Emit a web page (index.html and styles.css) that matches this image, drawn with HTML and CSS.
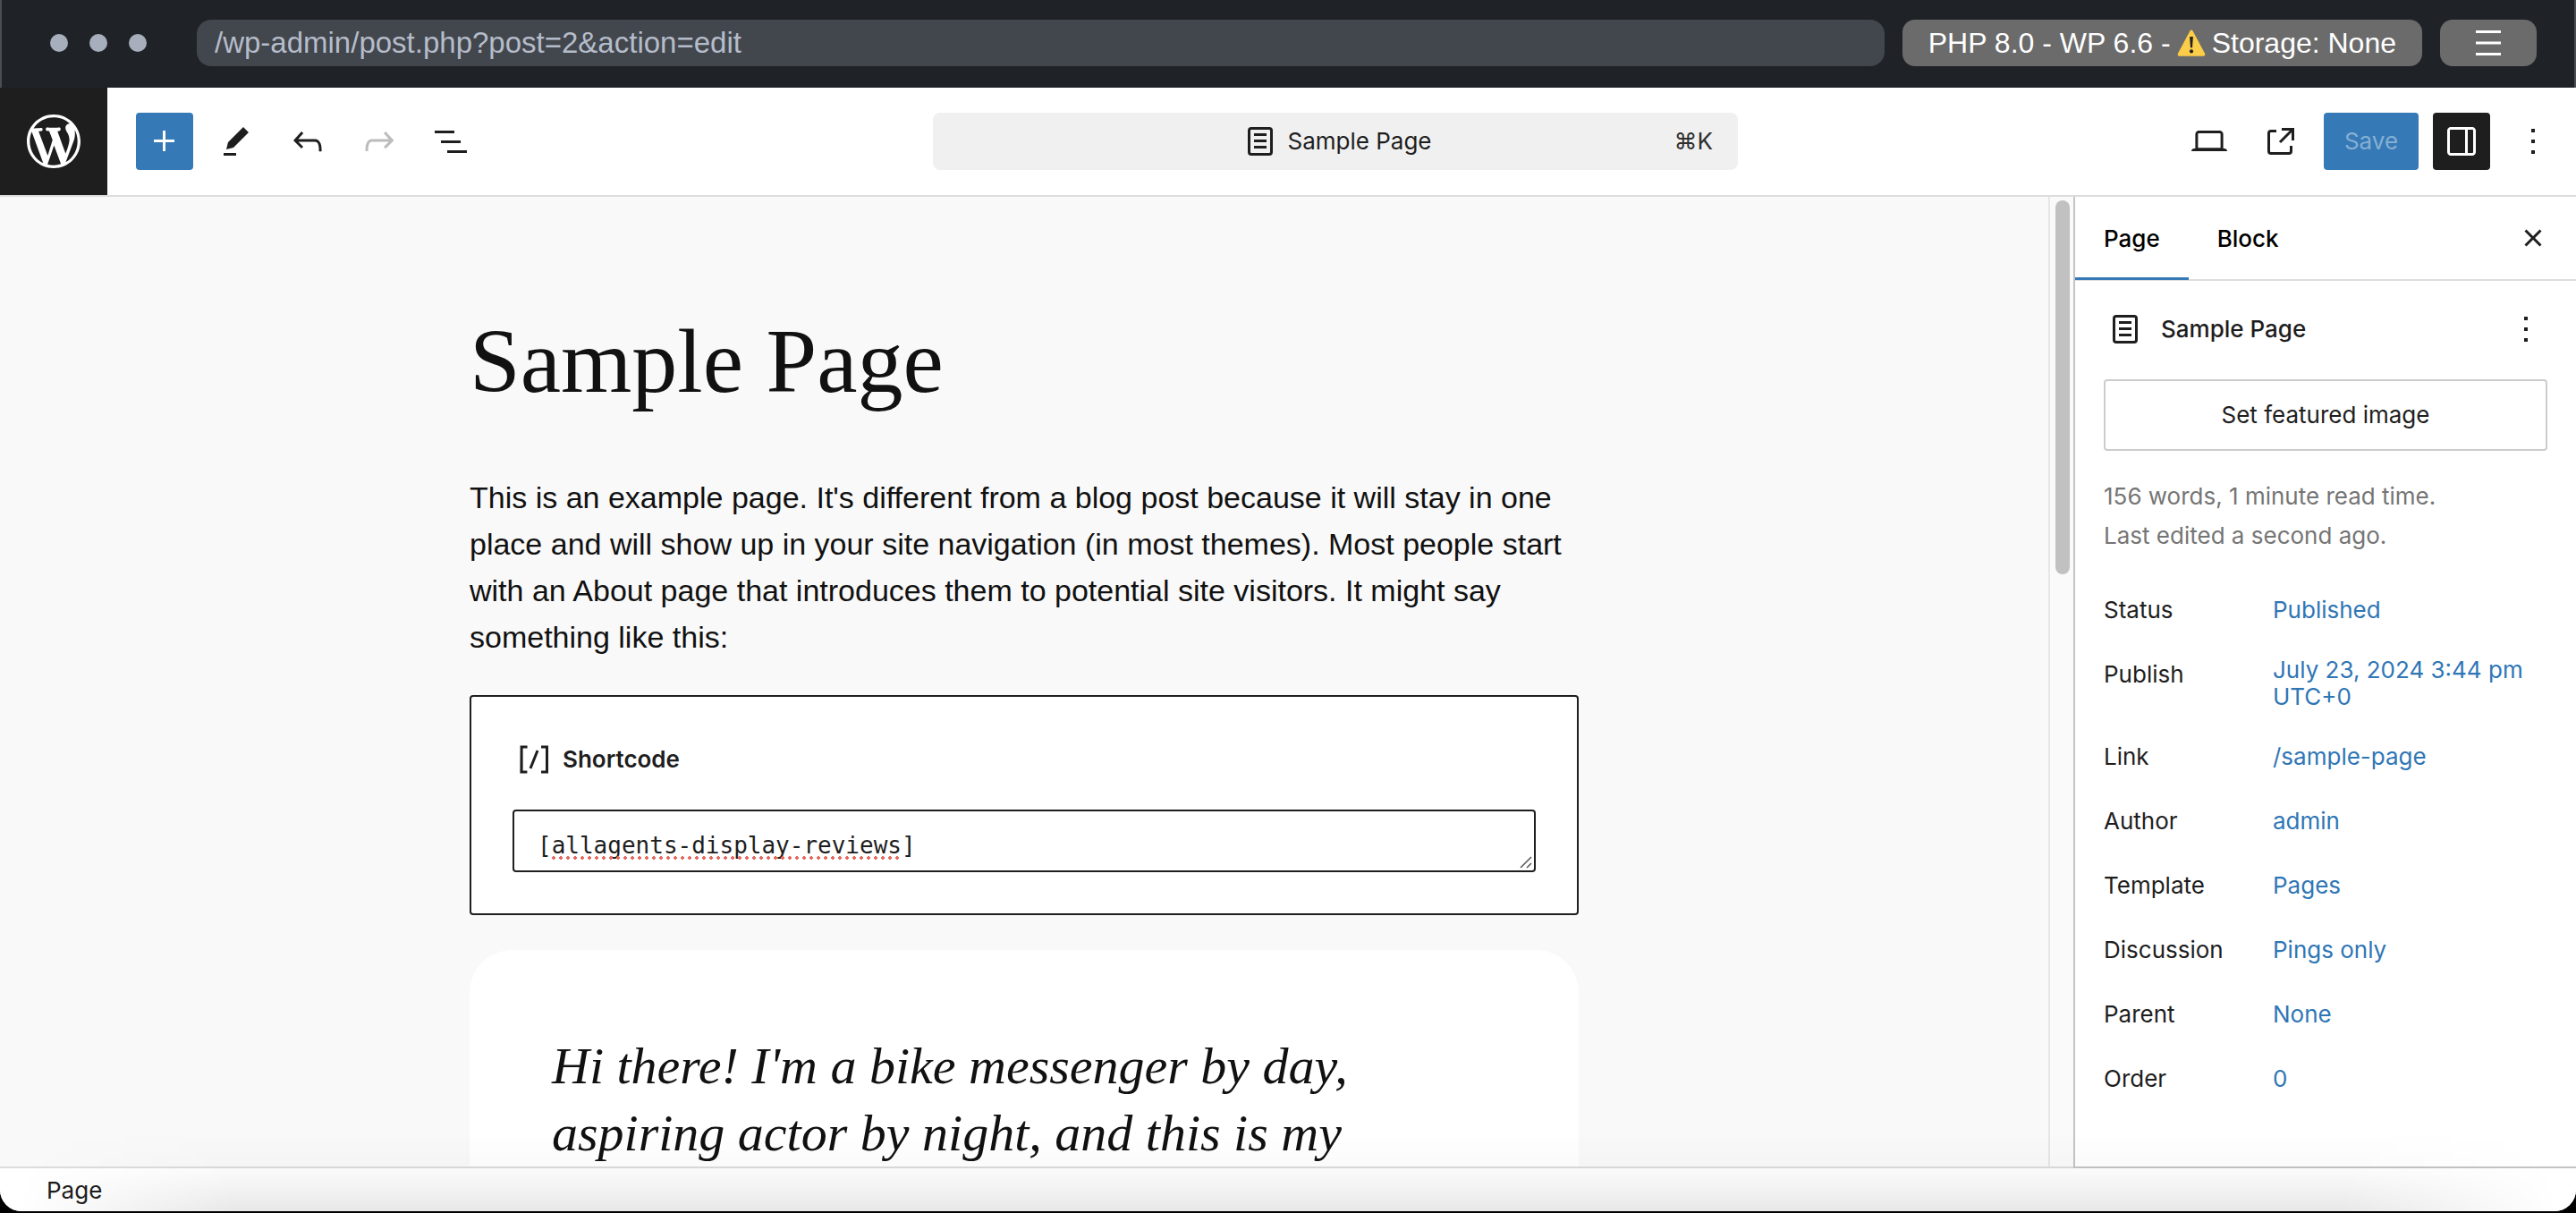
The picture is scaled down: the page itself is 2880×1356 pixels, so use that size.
FILE: index.html
```html
<!DOCTYPE html>
<html lang="en">
<head>
<meta charset="utf-8">
<title>Sample Page</title>
<link rel="stylesheet" href="styles.css">
</head>
<body>
<div class="window">
  <div class="browser-bar">
    <div class="dots"><span class="dot"></span><span class="dot"></span><span class="dot"></span></div>
    <input class="address" type="text" aria-label="Address" value="/wp-admin/post.php?post=2&amp;action=edit">
    <button class="bar-button" type="button">PHP 8.0 - WP 6.6 -
      <svg class="warning" viewBox="0 0 34 32" aria-hidden="true"><path d="M15.2 1.8a2 2 0 0 1 3.6 0L33 28.6a2 2 0 0 1-1.8 3H2.8a2 2 0 0 1-1.8-3z" fill="#fbcd48"/><path d="M15 8.5h4l-.9 13h-2.2z" fill="#222"/><circle cx="17" cy="26" r="2.2" fill="#222"/></svg>
      Storage: None</button>
    <button class="bar-button bar-menu" type="button" aria-label="Menu"><svg viewBox="0 0 28 28" class="menu-icon"><path d="M0 0h28v3H0zM0 12.500h28v3H0zM0 25h28v3H0z"/></svg></button>
  </div>

  <header class="header">
    <a class="logo" href="#" aria-label="View pages"><svg viewBox="-2 -2 24 24"><path d="M20 10c0-5.51-4.49-10-10-10C4.48 0 0 4.49 0 10c0 5.52 4.48 10 10 10 5.51 0 10-4.48 10-10zM7.78 15.37L4.37 6.22c.55-.02 1.17-.08 1.17-.08.5-.06.44-1.13-.06-1.11 0 0-1.45.11-2.37.11-.18 0-.37 0-.58-.01C4.12 2.69 6.87 1.11 10 1.11c2.33 0 4.45.87 6.05 2.34-.68-.11-1.65.39-1.65 1.58 0 .74.45 1.36.9 2.1.35.61.55 1.36.55 2.46 0 1.49-1.4 5-1.4 5l-3.03-8.37c.54-.02.82-.17.82-.17.5-.05.44-1.25-.06-1.22 0 0-1.44.12-2.38.12-.87 0-2.33-.12-2.33-.12-.5-.03-.56 1.2-.06 1.22l.92.08 1.26 3.41zM17.41 10c.24-.64.74-1.87.43-4.25.7 1.29 1.05 2.71 1.05 4.25 0 3.29-1.73 6.24-4.4 7.78.97-2.59 1.94-5.2 2.92-7.78zM6.1 18.09C3.12 16.65 1.11 13.53 1.11 10c0-1.3.23-2.48.72-3.59C3.25 10.3 4.67 14.2 6.1 18.09zm4.03-6.63l2.58 6.98c-.86.29-1.76.45-2.71.45-.79 0-1.57-.11-2.29-.33.81-2.38 1.62-4.74 2.42-7.1z"/></svg></a>
    <div class="toolbar">
      <div class="tools">
        <button class="tool tool-primary" type="button" aria-label="Add block"><svg class="icon" viewBox="0 0 24 24"><path d="M11 12.5V17.5H12.5V12.5H17.5V11H12.5V6H11V11H6V12.5H11Z"/></svg></button>
        <button class="tool" type="button" aria-label="Tools"><svg class="icon" viewBox="0 0 24 24"><path d="m19 7-3-3-8.5 8.5-1 4 4-1L19 7Zm-7 11.500H5V20h7v-1.5Z"/></svg></button>
        <button class="tool" type="button" aria-label="Undo"><svg class="icon" viewBox="0 0 24 24"><path d="M18.3 11.7c-.6-.6-1.4-.9-2.3-.9H6.7l2.9-3.3-1.1-1-4.5 5L8.500 16l1-1-2.7-2.7H16c.5 0 .9.2 1.3.5 1 1 1 3.4 1 4.5v.3h1.5v-.2c0-1.5 0-4.3-1.5-5.700z"/></svg></button>
        <button class="tool tool-disabled" type="button" aria-label="Redo" disabled><svg class="icon" viewBox="0 0 24 24"><path d="M15.6 6.5l-1.1 1 2.9 3.3H8c-.9 0-1.7.3-2.3.9-1.4 1.5-1.4 4.2-1.4 5.6v.2h1.5v-.3c0-1.1 0-3.5 1-4.5.3-.3.7-.5 1.3-.5h9.2L14.5 15l1.1 1.1 4.6-4.6-4.6-5z"/></svg></button>
        <button class="tool" type="button" aria-label="Document overview"><svg class="icon" viewBox="0 0 24 24"><path d="M3 6h11v1.5H3V6Zm3.5 5.5h11V13h-11v-1.5ZM21 17H10v1.5h11V17Z"/></svg></button>
      </div>
      <button class="command" type="button">
        <span class="command-title"><svg class="icon" viewBox="0 0 24 24"><path d="M15.5 7.5h-7V9h7V7.5Zm-7 3.5h7v1.5h-7V11Zm7 3.5h-7V16h7v-1.5Z"/><path fill-rule="evenodd" d="M17 4H7a2 2 0 0 0-2 2v12a2 2 0 0 0 2 2h10a2 2 0 0 0 2-2V6a2 2 0 0 0-2-2ZM7 5.5h10a.5.5 0 0 1 .5.5v12a.5.5 0 0 1-.5.5H7a.5.5 0 0 1-.5-.5V6a.5.5 0 0 1 .5-.5Z"/></svg>Sample Page</span>
        <span class="command-key">⌘K</span>
      </button>
      <div class="tools tools-end">
        <button class="tool" type="button" aria-label="View"><svg class="icon" viewBox="0 0 24 24"><path fill-rule="evenodd" d="M20.5 16h-.7V8c0-1.1-.9-2-2-2H6.2c-1.1 0-2 .9-2 2v8h-.7c-.8 0-1.5.7-1.5 1.5h20c0-.8-.7-1.5-1.5-1.5zM5.7 8c0-.3.2-.5.5-.5h11.6c.3 0 .5.2.5.5v7.6H5.700V8z"/></svg></button>
        <a class="tool" href="#" aria-label="View page"><svg class="icon" viewBox="0 0 24 24"><path d="M19.5 4.5h-7V6h4.44l-5.97 5.97 1.06 1.06L18 7.06v4.44h1.5v-7Zm-13 1a2 2 0 0 0-2 2v10a2 2 0 0 0 2 2h10a2 2 0 0 0 2-2v-3H17v3a.5.5 0 0 1-.5.5h-10a.5.5 0 0 1-.5-.5v-10a.5.5 0 0 1 .5-.5h3V5.500h-3Z"/></svg></a>
        <button class="save" type="button">Save</button>
        <button class="tool tool-active" type="button" aria-label="Settings"><svg class="icon" viewBox="0 0 24 24"><path fill-rule="evenodd" d="M18 4H6c-1.1 0-2 .9-2 2v12c0 1.1.9 2 2 2h12c1.1 0 2-.9 2-2V6c0-1.1-.9-2-2-2zm-4 14.5H6c-.3 0-.5-.2-.5-.5V6c0-.3.2-.5.5-.5h8v13zm4.500-.5c0 .3-.2.5-.5.5h-2.5v-13H18c.3 0 .5.2.5.5v12z"/></svg></button>
        <button class="tool" type="button" aria-label="Options"><svg class="icon" viewBox="0 0 24 24"><path d="M13 19h-2v-2h2v2zm0-6h-2v-2h2v2zm0-6h-2V5h2v2z"/></svg></button>
      </div>
    </div>
  </header>

  <div class="workspace">
    <main class="canvas">
      <article class="post">
        <h1 class="post-title">Sample Page</h1>
        <p class="post-text">This is an example page. It's different from a blog post because it will stay in one place and will show up in your site navigation (in most themes). Most people start with an About page that introduces them to potential site visitors. It might say something like this:</p>
        <section class="shortcode">
          <label class="shortcode-label" for="shortcode"><svg class="icon" viewBox="0 0 24 24"><path d="M16 4.2v1.5h2.5v12.5H16v1.5h4V4.2h-4zM4.2 19.8h4v-1.5H5.8V5.8h2.5V4.2h-4l-.1 15.6zm5.100-3.1l1.4.6 4-10-1.4-.6-4 10z"/></svg>Shortcode</label>
          <div class="shortcode-field">
            <textarea class="shortcode-input" id="shortcode" rows="1" spellcheck="false">[allagents-display-reviews]</textarea>
            <span class="spelling"></span>
            <svg class="grip" viewBox="0 0 14 14" aria-hidden="true"><path d="M1 13 13 1M8 13l5-5"/></svg>
          </div>
        </section>
        <blockquote class="quote">Hi there! I'm a bike messenger by day, aspiring actor by night, and this is my</blockquote>
      </article>
    </main>
    <div class="scrollbar"><div class="thumb"></div></div>

    <aside class="sidebar">
      <div class="tabs">
        <button class="tab tab-current" type="button">Page</button>
        <button class="tab" type="button">Block</button>
        <button class="tool tab-close" type="button" aria-label="Close settings"><svg class="icon" viewBox="0 0 24 24"><path d="M12 13.06l3.712 3.713 1.061-1.06L13.061 12l3.712-3.712-1.06-1.06L12 10.938 8.288 7.227l-1.061 1.06L10.939 12l-3.712 3.712 1.06 1.061L12 13.061z"/></svg></button>
      </div>
      <div class="panel">
        <div class="card">
          <svg class="icon" viewBox="0 0 24 24"><path d="M15.5 7.5h-7V9h7V7.5Zm-7 3.5h7v1.5h-7V11Zm7 3.5h-7V16h7v-1.5Z"/><path fill-rule="evenodd" d="M17 4H7a2 2 0 0 0-2 2v12a2 2 0 0 0 2 2h10a2 2 0 0 0 2-2V6a2 2 0 0 0-2-2ZM7 5.5h10a.5.5 0 0 1 .5.5v12a.5.5 0 0 1-.5.5H7a.5.5 0 0 1-.5-.5V6a.5.5 0 0 1 .5-.5Z"/></svg>
          <h2 class="card-title">Sample Page</h2>
          <button class="card-more" type="button" aria-label="Actions"><svg class="icon" viewBox="0 0 24 24"><path d="M13 19h-2v-2h2v2zm0-6h-2v-2h2v2zm0-6h-2V5h2v2z"/></svg></button>
        </div>
        <button class="featured" type="button">Set featured image</button>
        <p class="meta">156 words, 1 minute read time.<br>Last edited a second ago.</p>
        <div class="rows">
          <div class="row"><span class="row-label">Status</span><button class="row-value" type="button">Published</button></div>
          <div class="row"><span class="row-label">Publish</span><button class="row-value" type="button">July 23, 2024 3:44 pm UTC+0</button></div>
          <div class="row"><span class="row-label">Link</span><button class="row-value" type="button">/sample-page</button></div>
          <div class="row"><span class="row-label">Author</span><button class="row-value" type="button">admin</button></div>
          <div class="row"><span class="row-label">Template</span><button class="row-value" type="button">Pages</button></div>
          <div class="row"><span class="row-label">Discussion</span><button class="row-value" type="button">Pings only</button></div>
          <div class="row"><span class="row-label">Parent</span><button class="row-value" type="button">None</button></div>
          <div class="row"><span class="row-label">Order</span><button class="row-value" type="button">0</button></div>
        </div>
      </div>
    </aside>
  </div>

  <footer class="footer">Page</footer>
  <div class="shade"></div>
</div>
</body>
</html>
```
FILE: styles.css
```css
* { box-sizing: border-box; }

body {
  margin: 0;
  height: 100vh;
  padding-bottom: 2px;
  background: #000;
  color: #1e1e1e;
  font-family: Inter, "Liberation Sans", sans-serif;
  font-size: 26px;
  line-height: 32px;
}

button, input, textarea { font: inherit; color: inherit; margin: 0; }
button { border: 0; padding: 0; background: none; }
h1, h2, p, blockquote { margin: 0; }

.window {
  position: relative;
  display: flex;
  flex-direction: column;
  height: 100%;
  overflow: hidden;
  border-radius: 0 0 24px 24px;
  background: #fff;
}

/* Browser bar */
.browser-bar {
  flex: none;
  display: flex;
  align-items: center;
  gap: 20px;
  height: 98px;
  padding: 0 42px 2px 54px;
  border: solid #4b4e51;
  border-width: 0 2px;
  background: #1f2328;
  font-family: "Liberation Sans", Arial, sans-serif;
  font-size: 32px;
}
.dots { display: flex; gap: 24px; margin-right: 36px; }
.dot { width: 20px; height: 20px; border-radius: 50%; background: #a7afbc; }
.address {
  flex: 1;
  min-width: 0;
  height: 52px;
  padding: 0 20px;
  border: 0;
  border-radius: 16px;
  background: #42464d;
  color: #b5bcc9;
  font-size: 33px;
}
.bar-button {
  display: flex;
  align-items: center;
  gap: 7px;
  height: 52px;
  padding: 0 29px;
  border-radius: 14px;
  background: #6b6b6b;
  color: #fff;
  white-space: nowrap;
}
.bar-menu { padding: 0 40px; }
.warning { width: 32px; height: 32px; }
.menu-icon { width: 28px; height: 28px; fill: #fff; }

/* Editor header */
.icon { flex: none; display: block; width: 48px; height: 48px; fill: currentColor; }
.header {
  flex: none;
  display: flex;
  height: 122px;
  border-bottom: 2px solid #dcdcdc;
}
.logo {
  display: flex;
  align-items: center;
  justify-content: center;
  width: 120px;
  background: #1e1e1e;
}
.logo svg { width: 72px; height: 72px; fill: #fff; }
.toolbar {
  flex: 1;
  display: grid;
  grid-template-columns: 1fr minmax(0, 900px) 1fr;
  align-items: center;
  padding-right: 14px;
}
.tools { display: flex; align-items: center; gap: 16px; padding-left: 32px; }
.tools-end { justify-content: flex-end; padding: 0 2px 0 0; }
.tool {
  display: flex;
  align-items: center;
  justify-content: center;
  width: 64px;
  height: 64px;
  border-radius: 4px;
  color: #1e1e1e;
}
.tool-primary { background: #3579b6; color: #fff; }
.tool-active { background: #1e1e1e; color: #fff; }
.tool-disabled { color: #bcbcbc; }
.command {
  display: grid;
  grid-template-columns: 1fr auto 1fr;
  align-items: center;
  height: 64px;
  padding: 0 28px;
  border-radius: 8px;
  background: #f0f0f0;
}
.command-title { grid-column: 2; display: flex; align-items: center; gap: 6px; }
.command-key { text-align: right; color: #2f2f2f; }
.save {
  width: 106px;
  height: 64px;
  border-radius: 4px;
  background: #3579b6;
  color: #86afd3;
}

/* Canvas */
.workspace { flex: 1; display: flex; min-height: 0; }
.canvas { flex: 1; min-width: 0; overflow: hidden; background: #f9f9f9; color: #111; }
.post { max-width: 1240px; margin: 0 auto; padding-top: 120px; }
.post-title {
  font-family: "Liberation Serif", "Times New Roman", serif;
  font-size: 102px;
  font-weight: 400;
  line-height: 128px;
}
.post-text {
  margin-top: 62px;
  font-family: "Liberation Sans", Arial, sans-serif;
  font-size: 34px;
  line-height: 52px;
}
.shortcode {
  margin-top: 39px;
  padding: 46px;
  border: 2px solid #1e1e1e;
  border-radius: 4px;
  background: #fff;
  color: #1e1e1e;
}
.shortcode-label {
  display: flex;
  align-items: center;
  gap: 8px;
  height: 48px;
  font-weight: 600;
}
.shortcode-field { position: relative; margin-top: 32px; }
.shortcode-input {
  display: block;
  width: 100%;
  height: 70px;
  padding: 22px 26px 10px;
  overflow: hidden;
  resize: none;
  border: 2px solid #1e1e1e;
  border-radius: 4px;
  background: #fff;
  font-family: "DejaVu Sans Mono", monospace;
}
.spelling {
  position: absolute;
  left: 42px;
  bottom: 14px;
  width: 392px;
  height: 4px;
  background: radial-gradient(circle, #e8685f 2px, transparent 2px) 0 0 / 8px 4px;
}
.grip {
  position: absolute;
  right: 4px;
  bottom: 4px;
  width: 14px;
  height: 14px;
  fill: none;
  stroke: #555;
  stroke-width: 1.5;
}
.quote {
  margin-top: 39px;
  padding: 92px;
  border-radius: 48px;
  background: #fff;
  font-family: "Liberation Serif", "Times New Roman", serif;
  font-size: 58px;
  font-style: italic;
  line-height: 75px;
}

.scrollbar {
  flex: none;
  width: 28px;
  padding: 4px 4px 0 6px;
  border-left: 2px solid #e6e6e6;
  background: #fafafa;
}
.thumb { width: 16px; height: 418px; border-radius: 8px; background: #c1c1c1; }

/* Settings sidebar */
.sidebar {
  position: relative;
  flex: none;
  width: 562px;
  margin-bottom: -2px;
  overflow: hidden;
  border: solid #c4c4c4;
  border-width: 0 0 2px 2px;
  background: #fff;
}
.tabs {
  display: flex;
  align-items: center;
  height: 94px;
  padding-right: 16px;
  border-bottom: 2px solid #ddd;
}
.tab {
  height: 94px;
  padding: 2px 32px 0;
  color: #000;
  font-weight: 500;
}
.tab-current { box-shadow: inset 0 -3px #3579b6; }
.tab-close { margin-left: auto; }
.panel { padding: 30px 32px; }
.card { display: flex; align-items: center; gap: 16px; height: 48px; }
.card-title { flex: 1; font-size: 26px; font-weight: 500; }
.featured {
  display: block;
  width: 100%;
  height: 80px;
  margin-top: 32px;
  border: 2px solid #ccc;
  border-radius: 4px;
}
.meta { margin-top: 29px; color: #757575; line-height: 44px; }
.rows { display: grid; gap: 8px; margin-top: 29px; }
.row { display: flex; align-items: flex-start; }
.row-label { width: 189px; line-height: 64px; }
.row-value {
  flex: 1;
  min-height: 64px;
  padding: 12px 0;
  color: #2f76b5;
  line-height: 30px;
  text-align: left;
}

.footer {
  flex: none;
  height: 50px;
  padding: 0 52px;
  border-top: 2px solid #dcdcdc;
  background: #fff;
  line-height: 50px;
}
.shade {
  position: absolute;
  inset: auto 0 0;
  height: 90px;
  pointer-events: none;
  background: linear-gradient(transparent, rgba(0, 0, 0, 0.02) 50%, rgba(0, 0, 0, 0.09));
  mask-image: linear-gradient(90deg, transparent 20px, #000 260px calc(100% - 260px), transparent calc(100% - 20px));
}
```
